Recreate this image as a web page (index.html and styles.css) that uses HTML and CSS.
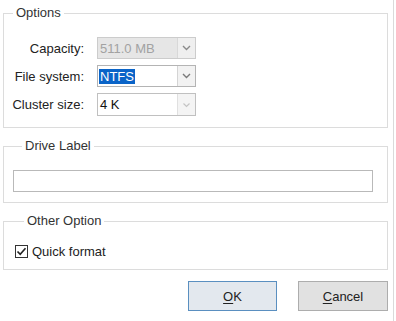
FILE: index.html
```html
<!DOCTYPE html>
<html>
<head>
<meta charset="utf-8">
<link rel="stylesheet" href="styles.css">
</head>
<body>
<div class="window">
  <fieldset class="group group-options">
    <legend>Options</legend>
    <div class="form-grid">
      <label class="lbl">Capacity:</label>
      <div class="combo combo-disabled">
        <span class="combo-value">511.0 MB</span>
        <span class="combo-btn"><svg width="9" height="6" viewBox="0 0 9 6"><path d="M1 1 L4.5 4.5 L8 1" fill="none" stroke="#8a8a8a" stroke-width="1.4"/></svg></span>
      </div>
      <label class="lbl">File system:</label>
      <div class="combo">
        <span class="combo-value"><span class="sel">NTFS</span></span>
        <span class="combo-btn"><svg width="9" height="6" viewBox="0 0 9 6"><path d="M1 1 L4.5 4.5 L8 1" fill="none" stroke="#7a7a7a" stroke-width="1.4"/></svg></span>
      </div>
      <label class="lbl">Cluster size:</label>
      <div class="combo combo-cluster">
        <span class="combo-value">4 K</span>
        <span class="combo-btn"><svg width="9" height="6" viewBox="0 0 9 6"><path d="M1.5 1.5 L4.5 4.5 L7.5 1.5" fill="none" stroke="#c4c4c4" stroke-width="1.2"/></svg></span>
      </div>
    </div>
  </fieldset>

  <fieldset class="group group-drive">
    <legend>Drive Label</legend>
    <input class="text-input" type="text" value="">
  </fieldset>

  <fieldset class="group group-other">
    <legend>Other Option</legend>
    <div class="check-row">
      <span class="checkbox"><svg width="11" height="11" viewBox="0 0 11 11"><path d="M1.5 5.5 L4.2 8.3 L9.5 2.2" fill="none" stroke="#222" stroke-width="1.6"/></svg></span>
      <span class="check-label">Quick format</span>
    </div>
  </fieldset>

  <div class="buttons">
    <button class="btn btn-default"><u>O</u>K</button>
    <button class="btn"><u>C</u>ancel</button>
  </div>
</div>
</body>
</html>
```
FILE: styles.css
```css
html, body {
  margin: 0;
  padding: 0;
  background: #ffffff;
}
body {
  font-family: "Liberation Sans", Arial, sans-serif;
  font-size: 13px;
  color: #222222;
}
.window {
  width: 394px;
  height: 321px;
  box-sizing: border-box;
  border-right: 1px solid #dadada;
  padding: 6px 0 0 3px;
}
.group {
  width: 385px;
  box-sizing: border-box;
  margin: 0 0 11px 0;
  padding: 0;
  border: 1px solid #dcdcdc;
  min-width: 0;
}
.group legend {
  margin-left: 9px;
  padding: 0 3px;
  line-height: 14px;
  height: 14px;
  color: #333333;
}
.group-options {
  padding: 17px 0 11px 0;
}
.form-grid {
  display: grid;
  grid-template-columns: 80px 99px;
  grid-template-rows: 22px 22px 23px;
  column-gap: 13px;
  row-gap: 6px;
  align-items: center;
}
.lbl {
  text-align: right;
  color: #222222;
}
.combo {
  height: 100%;
  box-sizing: border-box;
  border: 1px solid #b4b4b4;
  display: flex;
  background: #ffffff;
}
.combo-value {
  flex: 1;
  display: flex;
  align-items: center;
  padding-left: 1px;
  color: #111111;
}
.combo-btn {
  width: 17px;
  border-left: 1px solid #d4d4d4;
  background: #f2f2f2;
  display: flex;
  align-items: center;
  justify-content: center;
}
.combo-disabled {
  border-color: #cccccc;
  background: #e6e6e6;
}
.combo-disabled .combo-value {
  color: #a2a2a2;
  padding-left: 2px;
}
.combo-disabled .combo-btn {
  background: #efefef;
  border-left-color: #d8d8d8;
}
.combo-cluster {
  border-color: #c0c0c0;
}
.combo-cluster .combo-value {
  padding-left: 2px;
}
.combo-cluster .combo-btn {
  background: #f4f4f4;
  border-left-color: #e0e0e0;
}
.sel {
  background: #0a64c8;
  color: #ffffff;
  padding: 0 1px;
  line-height: 15px;
}
.group-drive {
  padding: 17px 0 10px 9px;
}
.text-input {
  display: block;
  width: 360px;
  height: 22px;
  box-sizing: border-box;
  margin: 0;
  border: 1px solid #b9b9b9;
  background: #ffffff;
  font: inherit;
  padding: 0 3px;
  outline: none;
}
.group-other {
  padding: 15px 0 10px 11px;
}
.check-row {
  display: flex;
  align-items: center;
  height: 16px;
  gap: 4px;
}
.checkbox {
  width: 13px;
  height: 13px;
  box-sizing: border-box;
  border: 1px solid #333333;
  background: #ffffff;
  display: flex;
  align-items: center;
  justify-content: center;
}
.check-label {
  color: #222222;
}
.buttons {
  width: 385px;
  display: flex;
  justify-content: flex-end;
  gap: 21px;
}
.btn {
  width: 90px;
  height: 30px;
  box-sizing: border-box;
  border: 1px solid #adadad;
  background: #e1e1e1;
  font: inherit;
  color: #222222;
  padding: 0;
  margin: 0;
}
.btn u {
  text-decoration-thickness: 1px;
  text-underline-offset: 2px;
}
.btn-default {
  width: 89px;
  border-color: #5a8fc0;
  background: #e3e8ee;
}
```
